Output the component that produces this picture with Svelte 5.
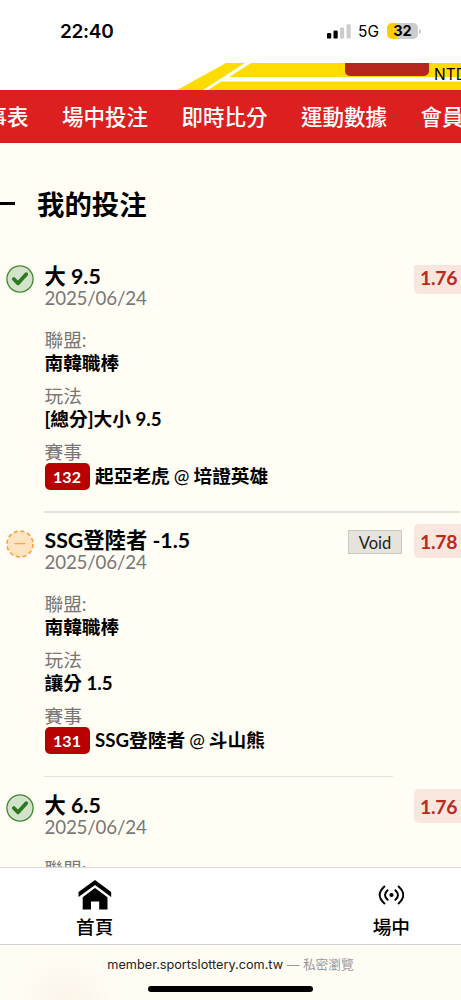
<script lang="ts">
	interface Bet {
		status: 'won' | 'void';
		title: string;
		date: string;
		odds: string;
		league: string;
		play?: string;
		code?: string;
		match?: string[];
	}

	const navItems = ['賽事表', '場中投注', '即時比分', '運動數據', '會員專區'];

	const bets: Bet[] = [
		{
			status: 'won',
			title: '大 9.5',
			date: '2025/06/24',
			odds: '1.76',
			league: '南韓職棒',
			play: '[總分]大小 9.5',
			code: '132',
			match: ['起亞老虎', '培證英雄']
		},
		{
			status: 'void',
			title: 'SSG登陸者 -1.5',
			date: '2025/06/24',
			odds: '1.78',
			league: '南韓職棒',
			play: '讓分 1.5',
			code: '131',
			match: ['SSG登陸者', '斗山熊']
		},
		{
			status: 'won',
			title: '大 6.5',
			date: '2025/06/24',
			odds: '1.76',
			league: '南韓職棒'
		}
	];
</script>

<div class="screen">
	<div class="status-bar">
		<span class="time">22:40</span>
		<div class="indicators">
			<svg width="24" height="15" viewBox="0 0 24 15">
				<rect x="0" y="9" width="4.2" height="5.6" rx="1.2" fill="#000" />
				<rect x="6.5" y="6.5" width="4.2" height="8.1" rx="1.2" fill="#000" />
				<rect x="13" y="3.6" width="4.2" height="11" rx="1.2" fill="#ccc" />
				<rect x="19.5" y="0.2" width="4.2" height="14.4" rx="1.2" fill="#ccc" />
			</svg>
			<span class="network">5G</span>
			<div class="battery"><span>32</span></div>
			<i class="battery-cap"></i>
		</div>
	</div>

	<header class="banner">
		<svg class="stripes" width="461" height="27" viewBox="0 0 461 27">
			<path d="M226 0H245L203 27H177Z" fill="#ffdc00" />
			<path d="M251 0H461V14H229Z" fill="#ffdc00" />
			<path d="M221 18.5H461V27H208Z" fill="#ffdc00" />
		</svg>
		<div class="banner-button"></div>
		<span class="currency">NTD</span>
	</header>

	<nav>
		{#each navItems as item}
			<span>{item}</span>
		{/each}
	</nav>

	<main>
		<h1><i class="dash"></i>我的投注</h1>

		<div class="bets">
			{#each bets as bet, i}
				<article class:inset={i === 1}>
					<div class="icon">
						{#if bet.status === 'won'}
							<svg width="28" height="28" viewBox="0 0 28 28">
								<circle cx="14" cy="14" r="13.1" fill="#d5e2cb" stroke="#3c8a2e" stroke-width="1.3" />
								<path
									d="M7.8 14L12.1 18.3L20.2 9.2"
									fill="none"
									stroke="#2c7a1f"
									stroke-width="3.8"
									stroke-linecap="round"
									stroke-linejoin="round"
								/>
							</svg>
						{:else}
							<svg width="28" height="28" viewBox="0 0 28 28">
								<circle
									cx="14"
									cy="14"
									r="13"
									fill="#ffe4c2"
									stroke="#ff9a2e"
									stroke-width="1.5"
									stroke-dasharray="4.1 2.71"
								/>
								<path d="M9 13.6H19" stroke="#ffa84a" stroke-width="1.4" stroke-linecap="round" />
							</svg>
						{/if}
					</div>
					<div class="body">
						<h2>{bet.title}</h2>
						<p class="date">{bet.date}</p>
						<dl>
							<dt>聯盟:</dt>
							<dd>{bet.league}</dd>
							{#if bet.play}
								<dt>玩法</dt>
								<dd>{bet.play}</dd>
							{/if}
							{#if bet.match}
								<dt>賽事</dt>
								<dd class="match">
									<span class="code">{bet.code}</span>
									<span>{bet.match[0]} <span class="at">@</span> {bet.match[1]}</span>
								</dd>
							{/if}
						</dl>
					</div>
					<div class="result">
						{#if bet.status === 'void'}
							<span class="void">Void</span>
						{/if}
						<span class="odds">{bet.odds}</span>
					</div>
				</article>
			{/each}
		</div>
	</main>

	<footer class="tabs">
		<div class="tab">
			<svg width="34" height="30" viewBox="0 0 34 30">
				<path d="M17 0L33.2 12V17L17 5L0.5 17V12Z" />
				<path d="M17 8L29.5 17.2V29.5H21.2V21.5H13V29.5H4.7V17.2Z" />
			</svg>
			<span>首頁</span>
		</div>
		<div class="tab">
			<svg width="26" height="30" viewBox="0 0 26 30">
				<circle cx="13.5" cy="15" r="2.1" />
				<g fill="none" stroke="#000" stroke-width="2" stroke-linecap="round">
					<path d="M6.4 6.6Q-3 15 6.4 23.4M20.6 6.6Q30 15 20.6 23.4" />
					<path d="M9.6 10.2Q4.4 15 9.6 19.8M17.4 10.2Q22.6 15 17.4 19.8" />
				</g>
			</svg>
			<span>場中</span>
		</div>
	</footer>

	<div class="browser-bar">
		<p>member.sportslottery.com.tw <span>— 私密瀏覽</span></p>
		<div class="home-indicator"></div>
	</div>
</div>

<style>
	:global(body) {
		margin: 0;
	}

	.screen {
		width: 461px;
		height: 1000px;
		display: flex;
		flex-direction: column;
		overflow: hidden;
		background: #fffdf4;
		color: #000;
		font-family: Lato, 'Noto Sans CJK TC', sans-serif;
		white-space: nowrap;
	}

	h1,
	h2,
	p,
	dl,
	dd {
		margin: 0;
	}

	svg {
		display: block;
		flex: none;
	}

	.status-bar {
		flex: none;
		height: 63px;
		box-sizing: border-box;
		padding: 0 40px 0 60px;
		display: flex;
		justify-content: space-between;
		align-items: center;
		background: #fff;
		font-family: Inter, sans-serif;
	}

	.time {
		font-size: 19px;
		font-weight: 600;
		letter-spacing: -0.3px;
	}

	.indicators {
		display: flex;
		align-items: center;
		margin-top: -1px;
	}

	.network {
		margin: 1px 8px 0 7px;
		font-size: 15.5px;
	}

	.battery {
		width: 31px;
		height: 16px;
		border-radius: 5px;
		background: linear-gradient(to right, #ffcc00 10px, #ccc 10px);
		font-size: 14.5px;
		font-weight: 700;
		line-height: 16px;
		text-align: center;
	}

	.battery-cap {
		width: 2px;
		height: 5px;
		margin-left: 1px;
		border-radius: 0 2px 2px 0;
		background: #ccc;
	}

	.banner {
		flex: none;
		height: 27px;
		position: relative;
		overflow: hidden;
		background: #fff;
	}

	.banner-button {
		position: absolute;
		left: 345px;
		top: -10px;
		width: 84px;
		height: 23px;
		border-radius: 5px;
		background: #b5271c;
	}

	.currency {
		position: absolute;
		left: 434px;
		top: 2px;
		font: 15.5px/20px Inter, sans-serif;
	}

	nav {
		flex: none;
		height: 53px;
		box-sizing: border-box;
		padding-bottom: 2px;
		display: flex;
		align-items: center;
		gap: 33.5px;
		margin-left: -36px;
		background: #dc1f1f;
		color: #fff;
		font-size: 21.5px;
		font-weight: 500;
	}

	main {
		flex: 1;
		min-height: 0;
		display: flex;
		flex-direction: column;
	}

	h1 {
		display: flex;
		align-items: center;
		gap: 22px;
		height: 122px;
		box-sizing: border-box;
		padding-bottom: 2px;
		flex: none;
		font-size: 27.4px;
		font-weight: 700;
	}

	.dash {
		width: 15px;
		height: 3px;
		background: #000;
	}

	.bets {
		flex: 1;
		min-height: 0;
		overflow: hidden;
	}

	article {
		position: relative;
		display: flex;
		height: 264.7px;
		box-sizing: border-box;
		padding: 15.6px 0 0 6px;
	}

	article:first-child {
		margin-top: -17px;
	}

	article::after {
		content: '';
		position: absolute;
		left: 44px;
		right: 1px;
		bottom: 0;
		height: 1.3px;
		background: #e5e1dc;
	}

	article.inset::after {
		right: 68px;
	}

	.icon {
		width: 38.5px;
		flex: none;
		padding-top: 1.4px;
	}

	.body {
		flex: 1;
	}

	h2 {
		font-size: 21.3px;
		font-weight: 700;
		line-height: 24px;
	}

	.date {
		font-size: 18.7px;
		letter-spacing: -0.15px;
		line-height: 21px;
		color: #777;
	}

	dl {
		margin-top: 20px;
		font-size: 18.7px;
	}

	dt {
		line-height: 22px;
		color: #777;
	}

	dd {
		margin-bottom: 9.5px;
		line-height: 24.5px;
		font-weight: 700;
	}

	.match {
		display: flex;
		align-items: center;
		gap: 5.5px;
		line-height: 27px;
	}

	.at {
		font-weight: 400;
		margin: 0 -0.5px;
	}

	.code {
		width: 45px;
		height: 27px;
		border-radius: 5px;
		background: #b90000;
		color: #fff;
		font-size: 16px;
		line-height: 27px;
		text-align: center;
	}

	.result {
		display: flex;
		align-items: flex-start;
		gap: 12px;
		margin: -4px -4px 0 0;
	}

	.void {
		width: 52px;
		height: 22px;
		margin-top: 6px;
		border: 1px solid #ccc9c2;
		background: #e5e3dc;
		color: #222;
		font-size: 16.5px;
		line-height: 24px;
		text-align: center;
	}

	.odds {
		width: 51px;
		height: 34px;
		box-sizing: border-box;
		padding-left: 6px;
		border-radius: 5px;
		background: #f8e6df;
		color: #b92a20;
		font-size: 19.4px;
		font-weight: 700;
		letter-spacing: -0.3px;
		line-height: 35px;
	}

	.tabs {
		flex: none;
		height: 78px;
		box-sizing: border-box;
		border-top: 1px solid #d9d9d9;
		border-bottom: 1px solid #d0d0d0;
		padding: 0 51px 0 76px;
		display: flex;
		justify-content: space-between;
		background: #fff;
	}

	.tab {
		display: flex;
		flex-direction: column;
		align-items: center;
		padding-top: 12px;
		gap: 3px;
		font-size: 18.7px;
		font-weight: 500;
		line-height: 28px;
	}

	.browser-bar {
		flex: none;
		height: 55px;
		display: flex;
		flex-direction: column;
		align-items: center;
		background: radial-gradient(circle at 65px 60px, #faf3e8 0, #fffcf4 50px);
		font: 12.7px/18px Inter, 'Noto Sans CJK TC', sans-serif;
		color: #222;
	}

	.browser-bar p {
		margin-top: 11px;
	}

	.browser-bar span {
		color: #999;
	}

	.home-indicator {
		width: 165px;
		height: 5.5px;
		margin-top: 12px;
		border-radius: 3px;
		background: #000;
	}
</style>
